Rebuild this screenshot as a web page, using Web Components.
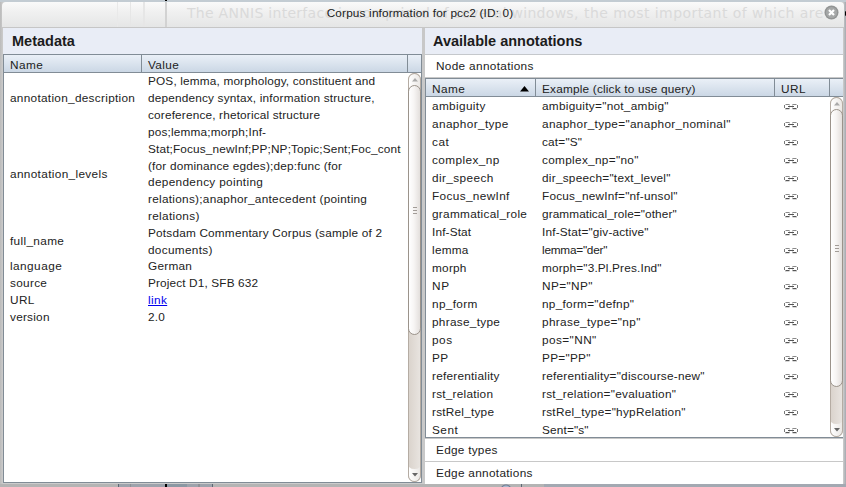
<!DOCTYPE html>
<html lang="en">
<head>
<meta charset="utf-8">
<title>Corpus information</title>
<style>
body{margin:0;width:846px;height:487px;overflow:hidden;font:11.8px "Liberation Sans",Arial,sans-serif;color:#222}
</style>
</head>
<body>
<corpus-window></corpus-window>
<script>
const define=(name,html,setup)=>customElements.define(name,class extends HTMLElement{
  connectedCallback(){
    if(this.shadowRoot)return;
    const t=document.createElement('template');t.innerHTML=html;
    this.attachShadow({mode:'open'}).append(t.content.cloneNode(true));
    if(setup)setup(this,this.shadowRoot);
  }
});

/* Line of text tracked so that it spans "w" pixels */
define('fit-text',`<style>:host{display:inline-block;white-space:nowrap}</style><slot></slot>`,h=>{
  const n=h.textContent.length;
  h.style.letterSpacing=((+h.getAttribute('w')+.7-h.getBoundingClientRect().width)/n).toFixed(3)+'px';
});

/* Chain link shown in the URL column */
define('link-icon',`<style>:host{display:block;width:16px;height:9px}svg{display:block}</style>
<svg width="16" height="9" viewBox="0 0 16 9" fill="none">
<path d="M2 7.500H6.500M9.500 7.500H14" stroke="#d8d8d8" stroke-width="1"/>
<path d="M6.500 2.500H2.500M9.500 2.500H13.500" stroke="#8a8a8a" stroke-width="1"/>
<path d="M1.500 3V6M14.500 3V6" stroke="#777" stroke-width="1"/>
<path d="M2.500 6.500H6.500M9.500 6.500H13.500M5 4.500H11" stroke="#555" stroke-width="1"/>
<path d="M6.500 5.500V6.500M9.500 5.500V6.500M6.500 2.500V3.500M9.500 2.500V3.500" stroke="#aaa" stroke-width="1"/></svg>`);

/* Vertical scrollbar; attribute "thumb" is the thumb height */
define('scroll-bar',`<style>
:host{display:flex;flex-direction:column;box-sizing:border-box;flex:none;width:13px;overflow:hidden;border-radius:7px;background:linear-gradient(90deg,#d9d2cb,#e9e5e1);box-shadow:inset 0 0 0 1px #b5aca3}
.b{height:14px;flex:none;display:flex;align-items:center;justify-content:center;background:linear-gradient(90deg,#fff,#ebe8e5);border:1px solid #b5aca3;box-sizing:border-box}
.u{border-radius:7px 7px 0 0;border-bottom:0;height:18px;margin-bottom:-6px;padding-bottom:6px}.d{border-radius:0 0 7px 7px;margin-top:auto;height:19px;border-top:0;padding-top:6px;clip-path:path("M0 0Q0 6 6.500 6Q13 6 13 0V19H0Z")}
.t{position:relative;flex:none;box-sizing:border-box;border:1px solid #9b938b;border-radius:7px;background:linear-gradient(90deg,#fff,#f7f5f4 45%,#e3dfdc);display:flex;flex-direction:column;align-items:center;justify-content:center;gap:2px}
.t i{width:4px;height:1px;background:#a29c97}
</style><div class="b u"><svg width="6" height="4"><path d="M3 0L6 3.500H0Z" fill="#aaa"/></svg></div>
<div class="t"><i></i><i></i><i></i></div>
<div class="b d"><svg width="6" height="4"><path d="M0 0H6L3 3.500Z" fill="#666"/></svg></div>`,
(h,r)=>{r.querySelector('.t').style.height=h.getAttribute('thumb')+'px'});

define('panel-title',`<style>:host{display:block;box-sizing:border-box;height:27px;padding-left:var(--inset,9px);background:#e9edf6;border-bottom:1px solid var(--line,#c5c8cc);font:bold 14.500px/27px "Liberation Sans",Arial,sans-serif;color:#1c1c1c}</style><slot></slot>`);

define('table-head',`<style>:host{display:grid;grid-template-columns:var(--cols);grid-template-rows:17px;flex:none;height:18px;box-sizing:border-box;border-bottom:1px solid #818c96;background:linear-gradient(#eaf0f7,#cbd7e5);line-height:20px}
::slotted(*){box-sizing:border-box;height:17px;border-right:1px solid #818c96;padding-left:6px;white-space:nowrap}::slotted(:last-child){border-right:0}</style><slot></slot>`);

define('meta-row',`<style>:host{display:grid;grid-template-columns:138px 259px;align-items:center;line-height:16.900px;min-height:17px}
span{padding-left:6px;overflow:hidden}::slotted(fit-text){vertical-align:top}.v ::slotted(fit-text){display:table!important}</style><span><slot name="key"></slot></span><span class="v"><slot></slot></span>`);

define('annotation-row',`<style>:host{display:grid;grid-template-columns:110px 242px 1fr;height:18px;line-height:18px}
span{padding-left:6px}fit-text{vertical-align:top}link-icon{margin:5px 0 0 5px}</style><span class="n"></span><span class="e"></span><link-icon></link-icon>`);

define('accordion-tab',`<style>:host{display:block;box-sizing:border-box;padding-left:11px;background:#fff;line-height:22px}</style><slot></slot>`);

define('metadata-table',`<style>:host{--cols:138px 266px 1fr;display:flex;flex-direction:column;flex:1;min-height:0;border:solid #818c96;border-width:0 1px 1px;background:#fff}
.b{display:flex;flex:1;min-height:0}.r{flex:1;min-width:0}a{color:#00e}</style>
<table-head><span><fit-text w="32.500">Name</fit-text></span><span><fit-text w="30.500">Value</fit-text></span><span></span></table-head>
<div class="b"><div class="r">
<meta-row><fit-text w="124.500" slot="key">annotation_description</fit-text><fit-text w="226.500">POS, lemma, morphology, constituent and</fit-text><fit-text w="226">dependency syntax, information structure,</fit-text><fit-text w="171.500">coreference, rhetorical structure</fit-text></meta-row>
<meta-row><fit-text w="97" slot="key">annotation_levels</fit-text><fit-text w="117.500">pos;lemma;morph;Inf-</fit-text><fit-text w="256">Stat;Focus_newInf;PP;NP;Topic;Sent;Foc_contr</fit-text><fit-text w="193.500">(for dominance egdes);dep:func (for</fit-text><fit-text w="114.500">dependency pointing</fit-text><fit-text w="218.500">relations);anaphor_antecedent (pointing</fit-text><fit-text w="51">relations)</fit-text></meta-row>
<meta-row style="line-height:16.500px"><fit-text w="53.500" slot="key">full_name</fit-text><fit-text w="233.500">Potsdam Commentary Corpus (sample of 2</fit-text><fit-text w="64">documents)</fit-text></meta-row>
<meta-row><fit-text w="51.500" slot="key">language</fit-text><fit-text w="43.500">German</fit-text></meta-row>
<meta-row><fit-text w="36.500" slot="key">source</fit-text><fit-text w="109.500">Project D1, SFB 632</fit-text></meta-row>
<meta-row><fit-text w="24" slot="key">URL</fit-text><fit-text w="18.500"><a href="#">link</a></fit-text></meta-row>
<meta-row><fit-text w="39" slot="key">version</fit-text><fit-text w="16.500">2.0</fit-text></meta-row>
</div><scroll-bar thumb="250"></scroll-bar></div>`);

/* name, example value, drawn width of the name, drawn width of the example */
const annotations=[['ambiguity','not_ambig',53,126],['anaphor_type','anaphor_nominal',76,188],['cat','S',16.5,39.5],['complex_np','no',67,96],['dir_speech','text_level',61,128],['Focus_newInf','nf-unsol',77,135],['grammatical_role','other',94.5,134],['Inf-Stat','giv-active',38.5,106],['lemma','der',36,64.5],['morph','3.Pl.Pres.Ind',34,119],['NP','NP',17,50],['np_form','defnp',45,91.5],['phrase_type','np',67.5,98],['pos','NN',20,54],['PP','PP',16,48],['referentiality','discourse-new',67,162],['rst_relation','evaluation',60.5,133.5],['rstRel_type','hypRelation',61.5,143],['Sent','s',25.5,46]];

define('annotation-table',`<style>:host{--cols:110px 239px 55px 1fr;display:flex;flex-direction:column;box-sizing:border-box;height:360px;border:1px solid #818c96;border-right:0;background:#fff}
.b{display:flex;flex:1;min-height:0;overflow:hidden}.r{flex:1}.s{display:flex;justify-content:space-between}.s svg{margin:7px 6px 0 0}</style>
<table-head><span class="s"><fit-text w="32.500">Name</fit-text><svg width="9" height="6"><path d="M4.500 0L9 5.500H0Z"/></svg></span><span><fit-text w="153">Example (click to use query)</fit-text></span><span><fit-text w="24.500">URL</fit-text></span><span></span></table-head>
<div class="b"><div class="r"></div><scroll-bar thumb="278"></scroll-bar></div>`,
(h,r)=>{
  const box=r.querySelector('.r');
  for(const [n,v,nw,ew] of annotations){
    const e=document.createElement('annotation-row');
    box.append(e);
    const put=(sel,text,w)=>{
      const f=document.createElement('fit-text');
      f.setAttribute('w',w);f.textContent=text;
      e.shadowRoot.querySelector(sel).append(f);
    };
    put('.n',n,nw);put('.e',n+'="'+v+'"',ew);
  }
});

define('title-bar',`<style>:host{position:relative;display:block;box-sizing:border-box;height:26px;border-bottom:1px solid #c6c6c6;border-radius:4px 4px 0 0;
background:linear-gradient(#d2d2d2,#d2d2d2) 163px 0/2px 100% no-repeat,linear-gradient(#e9e9e9,#e9e9e9) 115px 0/1px 100% no-repeat,linear-gradient(#e6e6e6,#e6e6e6) 128px 0/1px 100% no-repeat,linear-gradient(#e6e6e6,#e6e6e6) 141px 0/2px 100% no-repeat,linear-gradient(#fafafa,#f0f0f0 40%,#e5e6e6);overflow:hidden;text-align:center;line-height:23px;color:#222}
.g{position:absolute;left:185px;top:0;font:14px/22px "DejaVu Sans",sans-serif;color:#dadada}.h{left:582px}
.t{position:relative;right:3px}svg{position:absolute;right:5px;top:3px}</style>
<span class="g"><fit-text w="391">The ANNIS interface is comprised of several windows,</fit-text></span><span class="g h"><fit-text w="239">the most important of which are</fit-text></span><span class="t"><fit-text w="186">Corpus information for pcc2 (ID: 0)</fit-text></span>
<svg width="15" height="15"><circle cx="7.500" cy="7.500" r="7" fill="#929494"/><circle cx="7.500" cy="7.500" r="5.500" fill="#a6a8a8"/><path d="M5 5L10 10M10 5L5 10" stroke="#fff" stroke-width="2.200"/></svg>`);

define('corpus-window',`<style>
:host{display:block;box-sizing:border-box;width:846px;height:487px;padding:2px 2px 4px;background:
linear-gradient(#000,#000) 165px 0/2px 1px no-repeat,
radial-gradient(#000 60%,transparent) 845px 11px/3px 5px no-repeat,
linear-gradient(#000,#000) 165px 484px/2px 3px no-repeat,
linear-gradient(#5d6874,#5d6874) 118px 484px/1px 3px no-repeat,
linear-gradient(#5d6874,#5d6874) 212px 484px/1px 3px no-repeat,
linear-gradient(#8f9297,#8f9297) 130px 484px/1px 3px no-repeat,
linear-gradient(#8f9297,#8f9297) 198px 484px/2px 3px no-repeat,
linear-gradient(#8b98a3,#8b98a3) 167px 484px/20px 3px no-repeat,
linear-gradient(#9da3ac,#9da3ac) 119px 484px/93px 3px no-repeat,
linear-gradient(#5d6874,#5d6874) 521px 484px/1px 3px no-repeat,
radial-gradient(circle at 6px 6px,#a9b8cc 4px,#6d7c94 5px,transparent 6px) 500px 484px/12px 3px no-repeat,
linear-gradient(#a3a9b2,#a3a9b2) 544px 484px/302px 3px no-repeat,
linear-gradient(#b4b4b4,#b4b4b4) 0 484px/846px 3px no-repeat,
linear-gradient(#c3ccd3,#c3ccd3) 0 0/846px 2px no-repeat,
linear-gradient(90deg,#bbb,#ccc 3px,#ccc 843px,#a5a9b0)}
main{display:grid;grid-template-columns:419px 418px;column-gap:3px;height:455px;margin-left:1px;background:#c8c8c8}
section{display:flex;flex-direction:column;min-height:0}
.r{height:454px;--inset:8px}
.e1{height:22px;margin:1px 0}.e2{flex:1}
.m{--line:#818c96}.n{height:22px;margin-bottom:1px}
</style>
<title-bar></title-bar>
<main><section class="m"><panel-title>Metadata</panel-title><metadata-table></metadata-table></section>
<section class="r"><panel-title>Available annotations</panel-title><accordion-tab class="n"><fit-text w="97">Node annotations</fit-text></accordion-tab><annotation-table></annotation-table><accordion-tab class="e1"><fit-text w="61">Edge types</fit-text></accordion-tab><accordion-tab class="e2"><fit-text w="96">Edge annotations</fit-text></accordion-tab></section></main>`);
</script>
</body>
</html>
